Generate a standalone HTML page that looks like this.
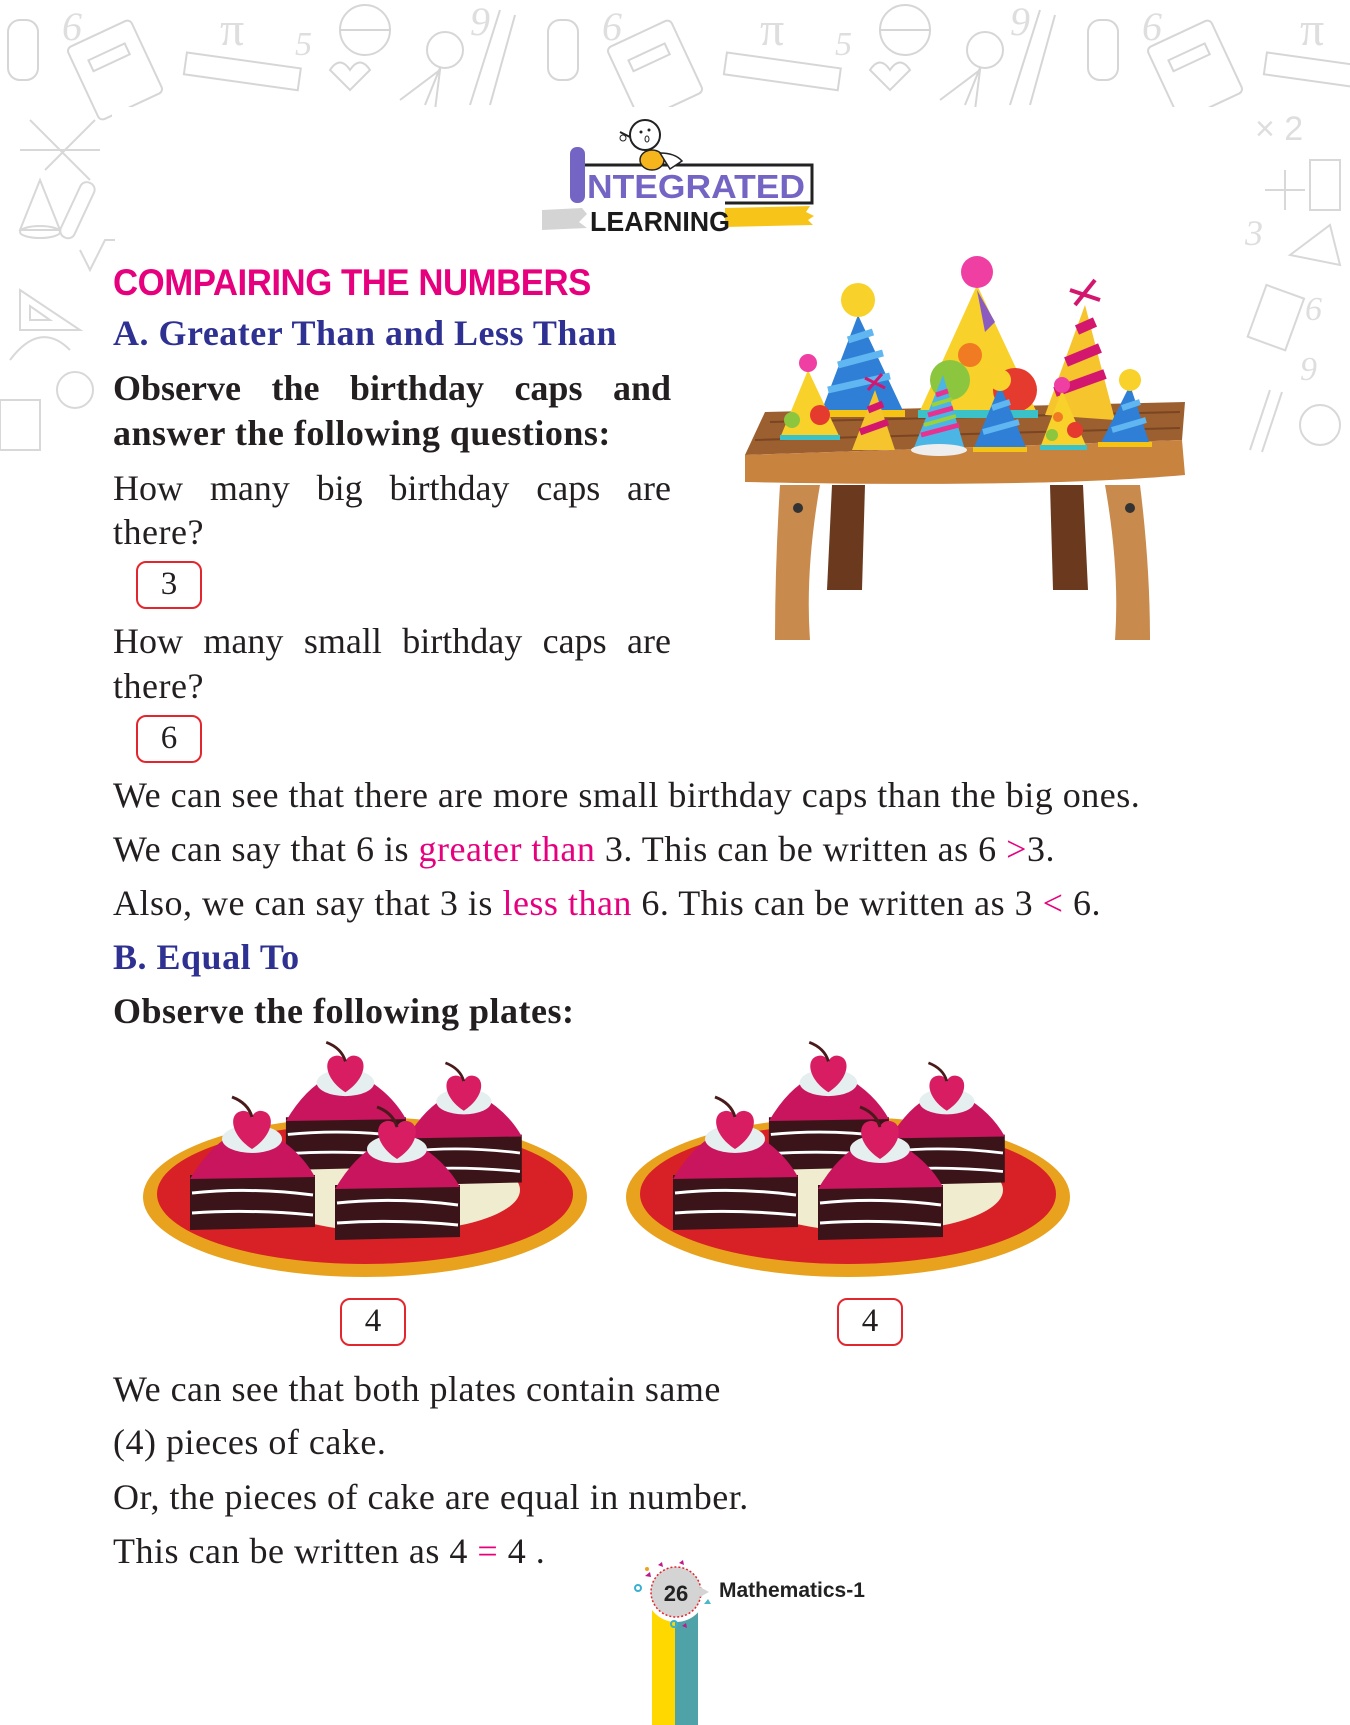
<!DOCTYPE html>
<html><head><meta charset="utf-8"><style>
*{margin:0;padding:0;box-sizing:border-box}
body{width:1350px;height:1725px;position:relative;background:#fff;overflow:hidden;font-family:"Liberation Serif",serif;color:#231f20}
.t{position:absolute;left:113px;font-size:36px;letter-spacing:0.5px;line-height:40px;white-space:nowrap}
.j{width:558px;text-align:justify;text-align-last:justify;white-space:normal;letter-spacing:0}
.b{font-weight:bold}
.blue{color:#2e3192;font-weight:bold}
.pk{color:#e6007e}
.box{position:absolute;border:2.5px solid #e3262d;border-radius:10px;font-size:33px;text-align:center;line-height:42px}
</style></head><body>

<svg style="position:absolute;left:0;top:0" width="1350" height="480" viewBox="0 0 1350 480">
<defs>
<g id="dd" fill="none" stroke="#d6d6d6" stroke-width="2">
<rect x="8" y="20" width="30" height="60" rx="12"/>
<text x="62" y="40" font-size="40" fill="#dedede" stroke="none" font-family="Liberation Serif" font-style="italic">6</text>
<rect x="80" y="30" width="70" height="80" transform="rotate(-25 115 70)" rx="5"/>
<rect x="95" y="50" width="40" height="12" transform="rotate(-25 115 70)"/>
<text x="220" y="45" font-size="48" fill="#dedede" stroke="none" font-family="Liberation Serif">π</text>
<rect x="185" y="60" width="115" height="22" transform="rotate(8 240 70)"/>
<text x="295" y="55" font-size="34" fill="#dedede" stroke="none" font-family="Liberation Serif" font-style="italic">5</text>
<circle cx="365" cy="30" r="25"/><line x1="340" y1="30" x2="390" y2="30"/>
<circle cx="445" cy="50" r="18"/><line x1="440" y1="68" x2="425" y2="105"/>
<text x="470" y="35" font-size="40" fill="#dedede" stroke="none" font-family="Liberation Serif" font-style="italic">9</text>
<line x1="500" y1="10" x2="470" y2="105"/><line x1="515" y1="15" x2="490" y2="105"/>
<path d="M400 100 l40 -30 l-5 40"/>
<path d="M330 70 q10 -15 20 0 q10 -15 20 0 l-20 20 z"/>
</g>
</defs>
<use href="#dd"/><use href="#dd" x="540"/><use href="#dd" x="1080"/>
<rect x="112" y="107" width="1130" height="380" fill="#fff"/>
<g fill="none" stroke="#d8d8d8" stroke-width="2">
<path d="M30 120 l60 60 M45 170 l50 -50 M20 150 l80 0"/>
<path d="M40 180 l-20 50 l40 0 z"/><ellipse cx="40" cy="232" rx="20" ry="6"/>
<rect x="70" y="180" width="15" height="60" rx="7" transform="rotate(25 77 210)"/>
<path d="M80 250 l10 20 l15 -30 l10 0"/>
<path d="M20 290 l60 40 l-60 0 z"/><path d="M30 320 l20 0 l-20 -14z"/>
<path d="M10 360 q30 -40 60 -10"/><circle cx="75" cy="390" r="18"/>
<rect x="0" y="400" width="40" height="50"/>
<text x="1255" y="140" font-size="34" fill="#dedede" stroke="none" font-family="Liberation Sans">× 2</text>
<path d="M1285 170 v40 M1265 190 h40"/><rect x="1310" y="160" width="30" height="50"/>
<text x="1245" y="245" font-size="36" fill="#dedede" stroke="none" font-family="Liberation Serif" font-style="italic">3</text>
<path d="M1290 255 l40 -30 l10 40 z"/>
<rect x="1255" y="290" width="40" height="55" transform="rotate(20 1275 320)"/>
<text x="1305" y="320" font-size="34" fill="#dedede" stroke="none" font-family="Liberation Serif" font-style="italic">6</text>
<text x="1300" y="380" font-size="34" fill="#dedede" stroke="none" font-family="Liberation Serif" font-style="italic">9</text>
<path d="M1270 390 l-20 60 M1282 392 l-20 60"/><circle cx="1320" cy="425" r="20"/>
</g>
</svg>

<svg style="position:absolute;left:530px;top:115px" width="300" height="120" viewBox="0 0 300 120">
<path d="M12 95 l40 -2 l5 6 l-8 8 l8 6 l-45 2 z" fill="#d4d4d4"/>
<path d="M195 93 l85 -2 l-4 6 l8 4 l-6 4 l5 5 l-88 2 z" fill="#f7c51a"/>
<path d="M55 50 H282 V88 H195" fill="none" stroke="#222" stroke-width="3"/>
<rect x="40" y="32" width="15" height="56" rx="7" fill="#7465c4"/>
<text x="57" y="83" font-family="Liberation Sans" font-weight="bold" font-size="33" fill="#7465c4" textLength="218" lengthAdjust="spacingAndGlyphs">NTEGRATED</text>
<text x="60" y="116" font-family="Liberation Sans" font-weight="bold" font-size="28" fill="#1b1b1b" textLength="140" lengthAdjust="spacingAndGlyphs">LEARNING</text>
<circle cx="115" cy="20" r="15" fill="#fff" stroke="#222" stroke-width="2"/>
<circle cx="111" cy="17" r="1.5" fill="#222"/><circle cx="119" cy="15" r="1.5" fill="#222"/><ellipse cx="117" cy="24" rx="2" ry="3" fill="none" stroke="#222"/>
<path d="M100 22 l-10 -5" stroke="#222" stroke-width="2"/><circle cx="93" cy="23" r="3" fill="none" stroke="#222"/>
<ellipse cx="122" cy="45" rx="12" ry="10" fill="#f6b51c" stroke="#222" stroke-width="1.5"/>
<path d="M130 38 q15 0 22 8 l-12 8 z" fill="#fff" stroke="#222" stroke-width="1.5"/>
</svg>

<div class="t" style="top:263px;font-family:'Liberation Sans',sans-serif;font-weight:bold;font-size:37px;color:#e6007e;letter-spacing:-0.5px;transform:scaleX(0.94);transform-origin:left">COMPAIRING THE NUMBERS</div>
<div class="t blue" style="top:313px;font-size:36px">A. Greater Than and Less Than</div>
<div class="t b j" style="top:368px">Observe the birthday caps and</div>
<div class="t b" style="top:413px">answer the following questions:</div>
<div class="t j" style="top:468px">How many big birthday caps are</div>
<div class="t" style="top:512px">there?</div>
<div class="box" style="left:136px;top:561px;width:66px;height:48px">3</div>
<div class="t j" style="top:621px">How many small birthday caps are</div>
<div class="t" style="top:666px">there?</div>
<div class="box" style="left:136px;top:715px;width:66px;height:48px">6</div>
<div class="t" style="top:775px">We can see that there are more small birthday caps than the big ones.</div>
<div class="t" style="top:829px">We can say that 6 is <span class="pk">greater than</span> 3. This can be written as 6 <span class="pk">&gt;</span>3.</div>
<div class="t" style="top:883px">Also, we can say that 3 is <span class="pk">less than</span> 6. This can be written as 3 <span class="pk">&lt;</span> 6.</div>
<div class="t blue" style="top:937px">B. Equal To</div>
<div class="t b" style="top:991px">Observe the following plates:</div>

<svg style="position:absolute;left:740px;top:250px" width="450" height="400" viewBox="0 0 450 400">
<path d="M40 235 q-5 80 -5 155 h35 q-5 -70 10 -155 z" fill="#c98a4e"/>
<path d="M92 235 l-5 105 h35 l3 -105 z" fill="#6b3a1e"/>
<path d="M310 235 l3 105 h35 l-5 -105 z" fill="#6b3a1e"/>
<path d="M365 235 q15 85 10 155 h35 q0 -75 -10 -155 z" fill="#c98a4e"/>
<circle cx="58" cy="258" r="5" fill="#333"/><circle cx="390" cy="258" r="5" fill="#333"/>
<path d="M25 162 L445 152 L442 190 L5 205 Z" fill="#9c5f30"/>
<path d="M5 205 L442 190 L445 225 Q300 238 5 232 Z" fill="#c8843f"/>
<path d="M30 172 L440 162 M15 190 L440 178" stroke="#7a4522" stroke-width="2"/>
<path d="M237 35 L178 165 L298 165 Z" fill="#f9d12b"/>
<circle cx="230" cy="105" r="12" fill="#f07b22"/><circle cx="210" cy="130" r="20" fill="#8cc63f"/><circle cx="275" cy="140" r="22" fill="#e53a2e"/><path d="M237 40 l18 32 l-10 10 z" fill="#8b5bc0"/>
<rect x="178" y="160" width="120" height="8" fill="#3ac2c8"/>
<circle cx="237" cy="22" r="16" fill="#ef3fa3"/>
<path d="M118 65 L80 165 L165 165 Z" fill="#2f7fd6"/>
<path d="M108 90 l25 -8 M98 115 l45 -12 M88 140 l62 -14" stroke="#5fb6f0" stroke-width="7"/>
<rect x="80" y="160" width="85" height="7" fill="#f4c314"/>
<circle cx="118" cy="50" r="17" fill="#f8d12a"/>
<path d="M345 55 L305 165 L375 170 Z" fill="#f6c42c"/>
<path d="M337 80 l18 -8 M326 112 l34 -14 M315 142 l50 -18" stroke="#d3176f" stroke-width="10"/>
<path d="M330 40 l30 10 M335 55 l20 -25" stroke="#d3176f" stroke-width="4"/>
<path d="M68 120 L40 188 L100 188 Z" fill="#f8d12a"/><circle cx="80" cy="165" r="10" fill="#e53a2e"/><circle cx="52" cy="170" r="8" fill="#8cc63f"/><rect x="40" y="185" width="60" height="5" fill="#3ac2c8"/><circle cx="68" cy="113" r="9" fill="#ef3fa3"/>
<path d="M135 140 L112 200 L155 200 Z" fill="#f6c42c"/><path d="M128 160 l15 -6 M120 182 l28 -10" stroke="#d3176f" stroke-width="7"/><path d="M125 128 l20 10 M128 140 l14 -16" stroke="#d3176f" stroke-width="3"/>
<path d="M203 125 L173 200 L225 200 Z" fill="#4bb5e6"/><path d="M196 145 l12 -4 M188 165 l25 -7 M181 185 l38 -10" stroke="#e8328f" stroke-width="5"/><path d="M192 155 l20 -6 M184 175 l32 -9" stroke="#9bd13b" stroke-width="4"/><ellipse cx="199" cy="200" rx="28" ry="6" fill="#eee"/>
<path d="M260 135 L233 200 L287 200 Z" fill="#2f7fd6"/><path d="M252 158 l18 -6 M243 182 l36 -10" stroke="#5fb6f0" stroke-width="6"/><rect x="233" y="197" width="54" height="5" fill="#f4c314"/><circle cx="260" cy="130" r="11" fill="#f8d12a"/>
<path d="M322 140 L300 198 L347 198 Z" fill="#f8d12a"/><circle cx="335" cy="180" r="8" fill="#e53a2e"/><circle cx="312" cy="185" r="6" fill="#8cc63f"/><circle cx="318" cy="167" r="5" fill="#f07b22"/><rect x="300" y="195" width="47" height="5" fill="#3ac2c8"/><circle cx="322" cy="135" r="8" fill="#ef3fa3"/>
<path d="M390 135 L360 195 L410 195 Z" fill="#2f7fd6"/><path d="M382 158 l18 -6 M372 180 l34 -10" stroke="#5fb6f0" stroke-width="6"/><rect x="358" y="192" width="54" height="5" fill="#f4c314"/><circle cx="390" cy="130" r="11" fill="#f8d12a"/>
</svg>

<svg style="position:absolute;left:0;top:1040px" width="1350" height="250" viewBox="0 1040 1350 250">
<defs>
<g id="cake">
<path d="M0 60 L125 60 L125 112 L0 115 Z" fill="#3a1418"/>
<path d="M2 78 Q60 72 123 80 M2 98 Q60 94 123 100" stroke="#fff" stroke-width="3" fill="none"/>
<path d="M0 64 Q20 30 45 18 L80 18 Q110 35 125 62 Z" fill="#c8155e"/>
<ellipse cx="62" cy="24" rx="30" ry="14" fill="#e6eff0"/>
<path d="M62 34 C40 20 38 -2 52 -4 C58 -5 62 0 62 3 C62 0 66 -5 72 -4 C86 -2 84 20 62 34 Z" fill="#d81d63"/>
<path d="M62 2 Q58 -12 42 -18" stroke="#4a1a1a" stroke-width="3" fill="none"/>
</g>
<g id="plate">
<ellipse cx="225" cy="147" rx="222" ry="80" fill="#e8a21d"/>
<ellipse cx="225" cy="144" rx="208" ry="70" fill="#d82027"/>
<ellipse cx="250" cy="140" rx="130" ry="42" fill="#efeccf"/>
<use href="#cake" x="152" y="10" transform="scale(0.96)"/>
<use href="#cake" x="290" y="32" transform="scale(0.92)"/>
<use href="#cake" x="50" y="65"/>
<use href="#cake" x="195" y="75"/>
</g>
</defs>
<use href="#plate" x="140" y="1050"/>
<use href="#plate" x="623" y="1050"/>
</svg>
<div class="box" style="left:340px;top:1298px;width:66px;height:48px">4</div>
<div class="box" style="left:837px;top:1298px;width:66px;height:48px">4</div>

<div class="t" style="top:1369px">We can see that both plates contain same</div>
<div class="t" style="top:1422px">(4) pieces of cake.</div>
<div class="t" style="top:1477px">Or, the pieces of cake are equal in number.</div>
<div class="t" style="top:1531px">This can be written as 4 <span class="pk">=</span> 4 .</div>

<div style="position:absolute;left:652px;top:1605px;width:23px;height:120px;background:#ffd800"></div>
<div style="position:absolute;left:675px;top:1605px;width:23px;height:120px;background:#4fa3a8"></div>
<svg style="position:absolute;left:630px;top:1560px" width="100" height="80" viewBox="0 0 100 80">
<circle cx="46" cy="32" r="30" fill="#fff"/>
<circle cx="46" cy="32" r="25" fill="#d4d4d4" stroke="#e3262d" stroke-width="1.5" stroke-dasharray="2 2"/>
<path d="M70 27 l9 5 l-9 5z" fill="#d4d4d4"/>
<circle cx="8" cy="28" r="3" fill="none" stroke="#3ab0d0" stroke-width="2"/>
<circle cx="44" cy="64" r="3" fill="none" stroke="#3ab0d0" stroke-width="2"/>
<path d="M15 16 l5 -4 l1 5z M28 5 l4 -3 l1 5z M49 3 l4 -3 l1 5z M52 66 l4 -3 l1 5z" fill="#c0188a"/>
<path d="M74 44 l4 -5 l3 5z" fill="#4ab8c8"/>
<circle cx="17" cy="9" r="2" fill="#f0a020"/>
<text x="46" y="41" text-anchor="middle" font-family="Liberation Sans" font-weight="bold" font-size="22" fill="#222">26</text>
</svg>
<div style="position:absolute;left:719px;top:1579px;font-family:'Liberation Sans',sans-serif;font-weight:bold;font-size:21px;color:#222">Mathematics-1</div>
</body></html>
